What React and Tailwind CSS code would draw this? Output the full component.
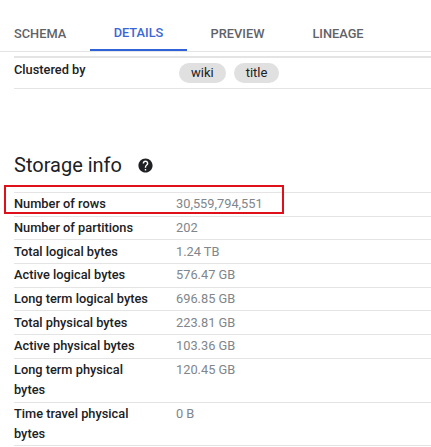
import React from 'react';

const tabs = [
  { label: 'SCHEMA', width: 'w-[90px]', pad: 'pl-[14px]' },
  { label: 'DETAILS', width: 'w-[97px]', pad: 'justify-center', active: true },
  { label: 'PREVIEW', width: 'w-[101px]', pad: 'justify-center' },
  { label: 'LINEAGE', width: 'w-[100px]', pad: 'justify-center' },
];

const rows = [
  ['Number of rows', '30,559,794,551'],
  ['Number of partitions', '202'],
  ['Total logical bytes', '1.24 TB'],
  ['Active logical bytes', '576.47 GB'],
  ['Long term logical bytes', '696.85 GB'],
  ['Total physical bytes', '223.81 GB'],
  ['Active physical bytes', '103.36 GB'],
  ['Long term physical bytes', '120.45 GB'],
  ['Time travel physical bytes', '0 B'],
];

const Chip = ({ children }) => (
  <span className="flex h-[20px] items-center rounded-full bg-[#e0e0e0] px-[12px] text-[13px] text-[#202124]">{children}</span>
);

const HelpIcon = () => (
  <svg viewBox="0 0 24 24" className="ml-[15px] h-[17px] w-[17px] fill-[#202124]">
    <path d="M12 2C6.48 2 2 6.48 2 12s4.48 10 10 10 10-4.48 10-10S17.52 2 12 2zm1 17h-2v-2h2v2zm2.07-7.75l-.9.92C13.45 12.9 13 13.5 13 15h-2v-.5c0-1.1.45-2.1 1.17-2.83l1.24-1.26c.37-.36.59-.86.59-1.41 0-1.1-.9-2-2-2s-2 .9-2 2H8c0-2.21 1.79-4 4-4s4 1.79 4 4c0 .88-.36 1.68-.93 2.25z" />
  </svg>
);

export default function App() {
  return (
    <div className="relative h-[447px] w-[431px] overflow-hidden bg-white font-['Roboto',sans-serif]">
      <div className="flex h-[52px] items-stretch border-b border-[#e4e4e4] pt-[15px]">
        {tabs.map((tab) => (
          <div
            key={tab.label}
            className={`flex items-center pt-[2px] text-[12.8px] font-medium ${tab.width} ${tab.pad} ${
              tab.active ? 'border-b-2 border-[#2f62d8] text-[#3b67d6]' : 'text-[#5f6368]'
            }`}
          >
            {tab.label}
          </div>
        ))}
      </div>

      <div className="ml-[14px] mt-[4px] flex h-[33px] border-y border-t-2 border-y-[#e4e4e4]">
        <div className="w-[166px] pt-[2px] text-[12.8px] font-medium text-[#202124]">Clustered by</div>
        <div className="-ml-[1px] flex gap-[8px] pt-[5px]">
          <Chip>wiki</Chip>
          <Chip>title</Chip>
        </div>
      </div>

      <div className="ml-[14px] mt-[63px] flex items-center text-[20px] leading-[26px] text-[#202124]">
        Storage info
        <HelpIcon />
      </div>

      <div className="ml-[14px] mt-[14px] border-b border-[#e4e4e4]">
        {rows.map(([label, value]) => (
          <div key={label} className="flex border-t border-[#e4e4e4] py-[1.35px] text-[12.8px] leading-[20px]">
            <div className="w-[162px] shrink-0 pr-[20px] font-medium text-[#202124]">{label}</div>
            <div className="text-[#80868b]">{value}</div>
          </div>
        ))}
      </div>

      <div className="absolute left-[4px] top-[185px] h-[29px] w-[280px] border-2 border-[#e0101a]" />
    </div>
  );
}
